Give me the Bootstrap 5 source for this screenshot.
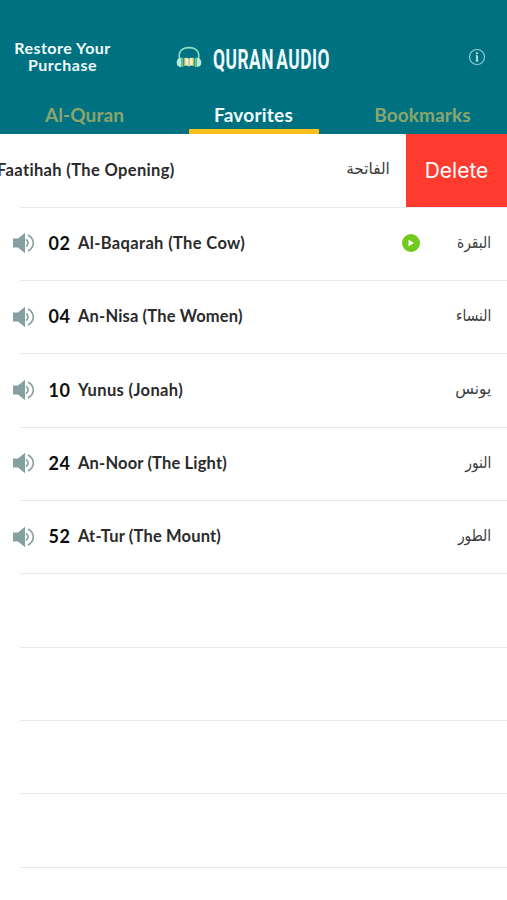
<!DOCTYPE html>
<html lang="en">
<head>
<meta charset="utf-8">
<meta name="viewport" content="width=device-width, initial-scale=1">
<title>Quran Audio</title>
<link href="https://cdn.jsdelivr.net/npm/bootstrap@5.3.0/dist/css/bootstrap.min.css" rel="stylesheet">
<style>
body{font-family:Lato,"Open Sans",sans-serif;height:900px;overflow:hidden;color:#2b2b2b;background:#fff;font-variant-ligatures:none}
.topbar{height:134px;background:#007181;color:#f0fbfc}
.brand-row{height:96px;padding-top:39px}
.restore{width:125px;font-size:16px;line-height:17px;font-weight:700;letter-spacing:.5px}
.brand{margin-left:51px;padding-top:6px}
.info{margin-right:21px;padding-top:9px}
.tabs .tab{height:38px;line-height:38px;font-size:19px;font-weight:700;color:#8ba56d;letter-spacing:.1px}
.tabs .tab.on{color:#f0fbfc;letter-spacing:.25px}
.tab-bar{width:130px;height:5px;background:#fbbf1c}
.sura{height:73.3px;padding-right:16px;position:relative}
.sura::after{content:"";position:absolute;left:20px;right:0;bottom:-.6px;height:1px;background:#e8e9ea}
.vol{width:23px;margin-left:12px}
.num{width:36px;margin-left:6.5px;margin-right:.5px;text-align:center;font-size:18px;font-weight:700;color:#0c0c0c;letter-spacing:.5px}
.title{font-size:16.5px;font-weight:700;white-space:nowrap;letter-spacing:.16px}
.title.loose{letter-spacing:.35px}
.num,.title,.vol{margin-bottom:1px}
.ar{font-family:"DejaVu Sans","Noto Sans",sans-serif;font-size:15px;color:#3c3c3c;transform:scale(.92,1.08);transform-origin:right center;margin-bottom:2px}
.ar.wide{transform:scale(1.02,1.08)}
.play{margin-right:34px;margin-bottom:1px}
.del{width:101px;margin-right:-16px;background:#ff3b30;color:#fff;font-family:Inter,sans-serif;font-size:21px;z-index:1;height:73.3px;align-self:flex-start}
.shifted{margin-left:-3px}
</style>
</head>
<body>
<svg class="d-none" xmlns="http://www.w3.org/2000/svg">
<symbol id="vol" viewBox="0 0 23 22"><path d="M1 6.500h5L13 .7v20.600L6 15.500H1z" fill="#86a0a2"/><path d="M14 7.300q4.200 3.700 0 7.400M16 3q5.300 3 5.300 8t-5.300 8" fill="none" stroke="#86a0a2" stroke-width="1.600"/></symbol>
</svg>
<header class="topbar">
<div class="brand-row d-flex align-items-start">
<div class="restore text-center">Restore Your Purchase</div>
<div class="brand d-flex">
<svg width="26" height="26" viewBox="0 0 26 26"><path d="M3.500 14C2 6 6.500 2.600 13 2.600S24 6 22.500 14" fill="none" stroke="#8edfc1" stroke-width="1.600"/><path d="M5.500 12.500v9.500Q.7 22 .7 17.500t4.800-5zM20.500 12.500v9.500q4.800 0 4.800-4.500t-4.800-5z" fill="#b9ecd2"/><path d="M5.500 13h2v9h-2zM18.500 13h2v9h-2z" fill="#5fc49b"/><path d="M8 13q3-1 5 .7 2-1.700 5-.7v8q-3-1-5 .5-2-1.500-5-.5z" fill="#f4f0c5"/><path d="M8 13h1.300v8H8zM16.700 13H18v8h-1.300z" fill="#b6bd58"/><path d="M13 13.700v8" stroke="#9a9b70" stroke-width=".8"/></svg>
<svg class="ms-2" width="124" height="40" viewBox="0 0 124 40" overflow="visible" font-family="Roboto, sans-serif" font-weight="700" font-size="28" fill="#f0fbfc"><text x="3" y="24" textLength="117" lengthAdjust="spacingAndGlyphs" letter-spacing=".8" word-spacing="-4">QURAN AUDIO</text></svg>
</div>
<svg class="info ms-auto" width="18" height="27" viewBox="0 0 18 18" overflow="visible"><circle cx="9" cy="9" r="7.500" fill="none" stroke="#8fcbdb" stroke-width="1.200"/><path d="M9 7.500V13" fill="none" stroke="#d9f1f5" stroke-width="1.600"/><path d="M7.700 7.600H9M7.500 13h3" stroke="#d9f1f5" stroke-width=".8"/><circle cx="9" cy="5.200" r="1" fill="#d9f1f5"/></svg>
</div>
<nav class="tabs row g-0 text-center">
<div class="col tab">Al-Quran</div>
<div class="col tab on position-relative">Favorites<div class="tab-bar position-absolute bottom-0 start-50 translate-middle-x"></div></div>
<div class="col tab">Bookmarks</div>
</nav>
</header>
<main>
<div class="sura d-flex align-items-center"><span class="title loose shifted">Faatihah (The Opening)</span><span class="ar wide ms-auto me-3" lang="ar" dir="rtl">الفاتحة</span><div class="del d-flex align-items-center justify-content-center">Delete</div></div>
<div class="sura d-flex align-items-center"><svg class="vol" height="22"><use href="#vol"/></svg><span class="num">02</span><span class="title loose">Al-Baqarah (The Cow)</span><svg class="play ms-auto" width="18" height="18" viewBox="0 0 18 18"><circle cx="9" cy="9" r="9" fill="#72c91e"/><path d="M6.500 5.800v6.400L12 9z" fill="#fff"/></svg><span class="ar" lang="ar" dir="rtl">البقرة</span></div>
<div class="sura d-flex align-items-center"><svg class="vol" height="22"><use href="#vol"/></svg><span class="num">04</span><span class="title">An-Nisa (The Women)</span><span class="ar ms-auto" lang="ar" dir="rtl">النساء</span></div>
<div class="sura d-flex align-items-center"><svg class="vol" height="22"><use href="#vol"/></svg><span class="num">10</span><span class="title loose">Yunus (Jonah)</span><span class="ar wide ms-auto" lang="ar" dir="rtl">يونس</span></div>
<div class="sura d-flex align-items-center"><svg class="vol" height="22"><use href="#vol"/></svg><span class="num">24</span><span class="title">An-Noor (The Light)</span><span class="ar ms-auto" lang="ar" dir="rtl">النور</span></div>
<div class="sura d-flex align-items-center"><svg class="vol" height="22"><use href="#vol"/></svg><span class="num">52</span><span class="title">At-Tur (The Mount)</span><span class="ar ms-auto" lang="ar" dir="rtl">الطور</span></div>
<div class="sura"></div><div class="sura"></div><div class="sura"></div><div class="sura"></div>
</main>
<script src="https://cdn.jsdelivr.net/npm/bootstrap@5.3.0/dist/js/bootstrap.bundle.min.js"></script>
</body>
</html>
